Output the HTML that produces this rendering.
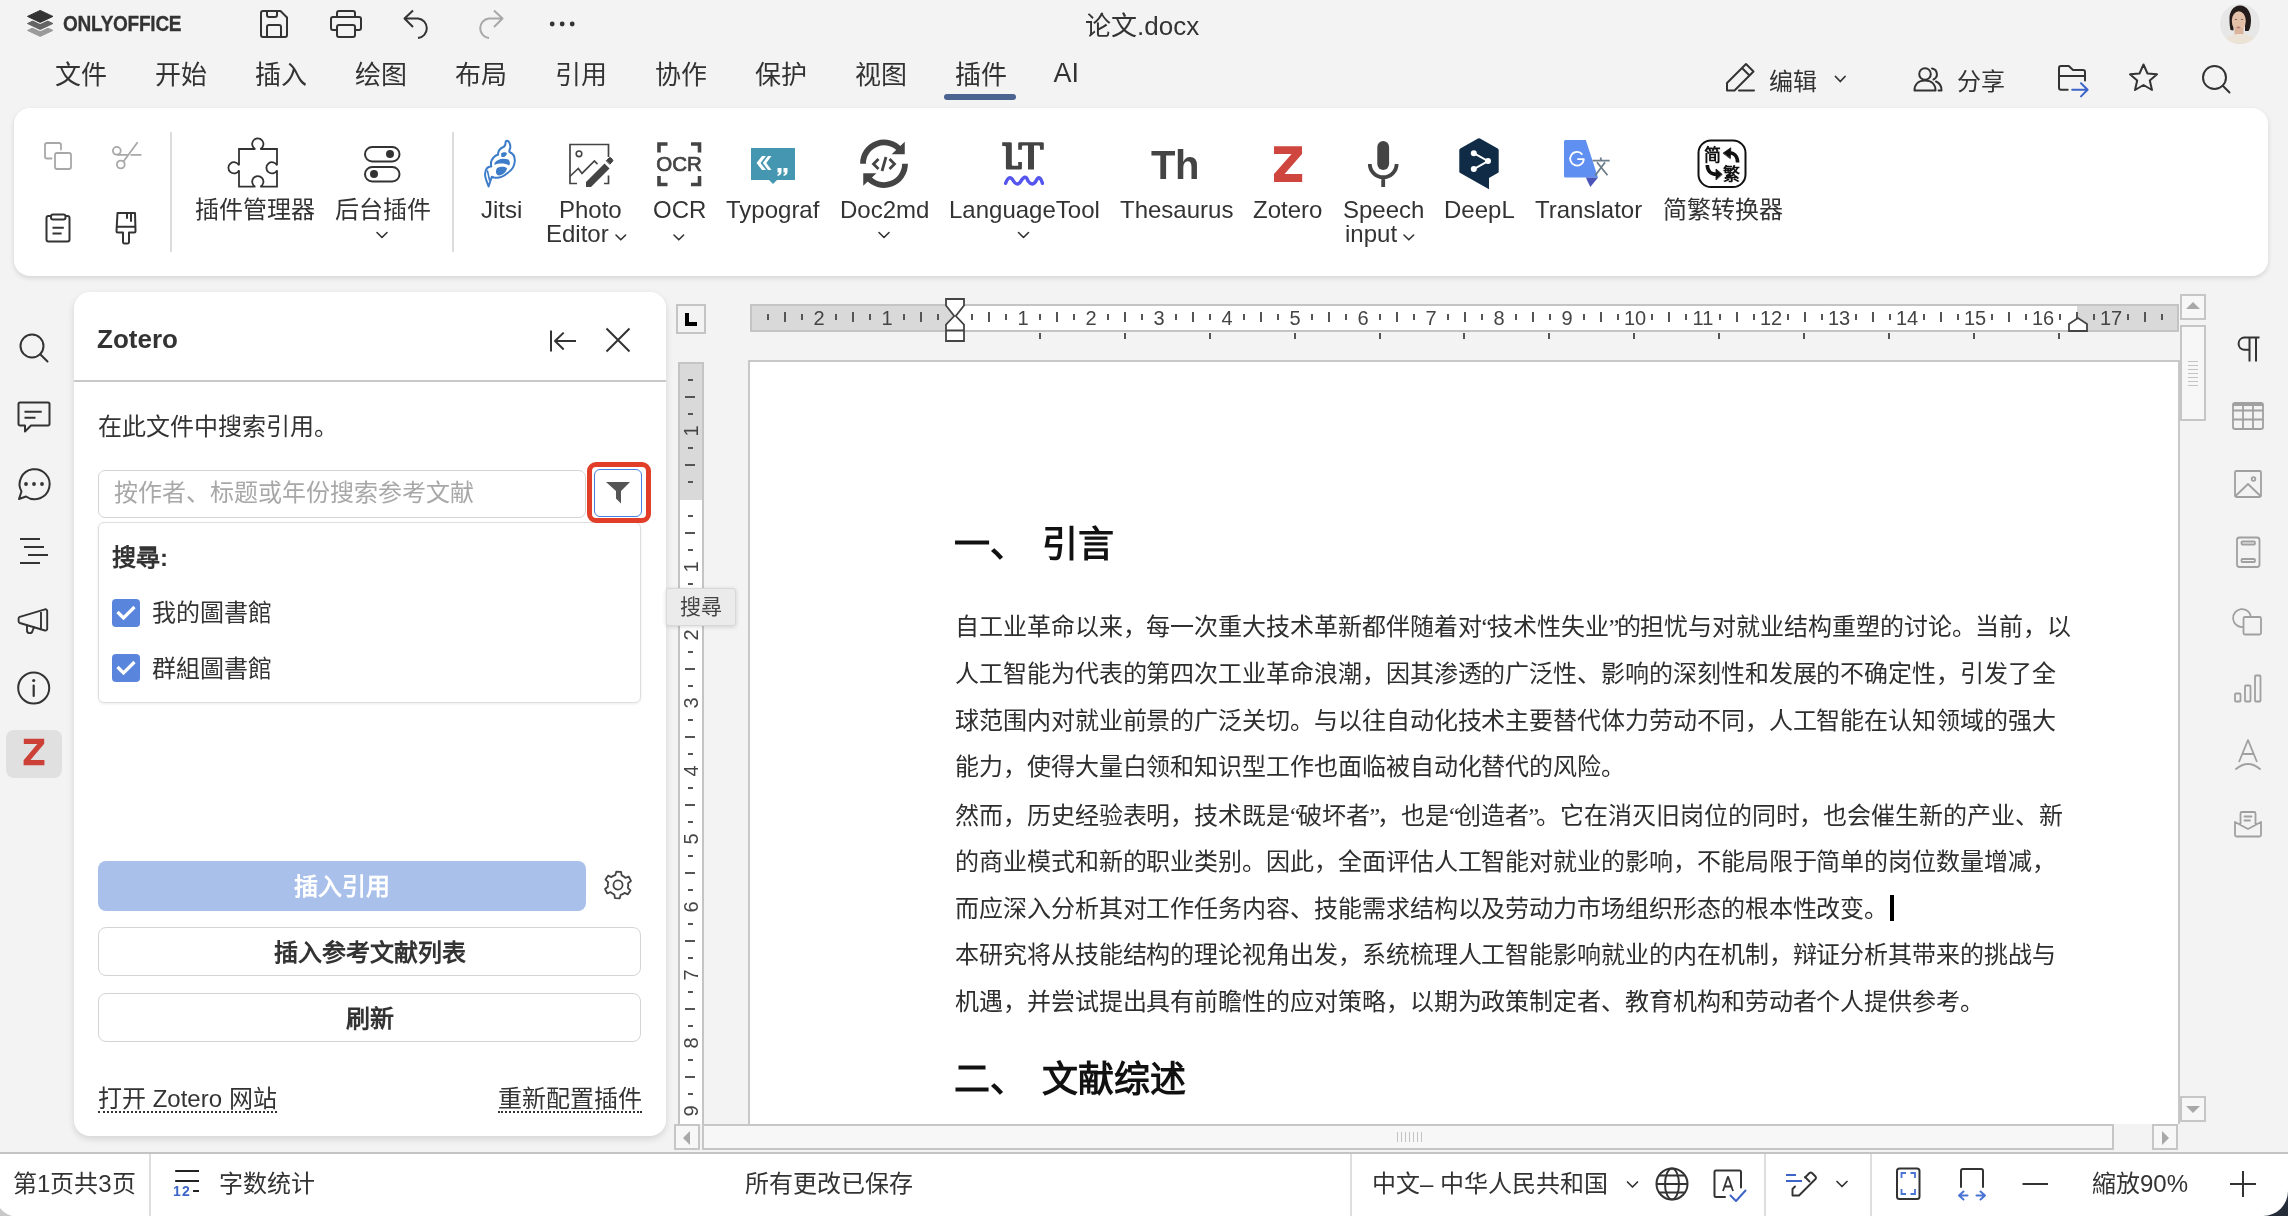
<!DOCTYPE html>
<html lang="zh-CN"><head><meta charset="utf-8">
<style>
*{box-sizing:border-box;margin:0;padding:0}
html,body{width:2288px;height:1216px;overflow:hidden}
body{will-change:transform;background:#f3f3f3;font-family:"Liberation Sans",sans-serif;color:#333;position:relative}
.a{position:absolute}
.t{white-space:nowrap;line-height:1}
svg.i{position:absolute;overflow:visible;fill:none;stroke:#333;stroke-width:2;stroke-linecap:round;stroke-linejoin:round}
.tab{position:absolute;top:58.5px;font-size:26px;line-height:32px;color:#333;white-space:nowrap}
.lbl{position:absolute;top:197px;font-size:24px;line-height:25px;color:#333;white-space:nowrap;text-align:center}
.doc{position:absolute;left:956px;width:1116px;font-family:"Liberation Serif",serif;font-size:24px;letter-spacing:-0.07px;line-height:30px;color:#2e2e2e;white-space:nowrap;text-align:left}
.q{letter-spacing:-2.95px}
.ri{position:absolute;left:2232px}
</style></head><body>

<!-- ===== TITLE BAR ===== -->
<div class="a t" style="left:62.5px;top:13px;font-size:22px;font-weight:bold;color:#333;letter-spacing:-0.3px;transform:scaleX(0.865);transform-origin:0 0;-webkit-text-stroke:0.3px #333">ONLYOFFICE</div>
<div class="a t" style="left:1085px;top:12.5px;font-size:26px;color:#333">论文.docx</div>

<!-- ===== MENU TABS ===== -->
<div class="tab" style="left:55px">文件</div>
<div class="tab" style="left:155px">开始</div>
<div class="tab" style="left:255px">插入</div>
<div class="tab" style="left:355px">绘图</div>
<div class="tab" style="left:455px">布局</div>
<div class="tab" style="left:555px">引用</div>
<div class="tab" style="left:655px">协作</div>
<div class="tab" style="left:755px">保护</div>
<div class="tab" style="left:855px">视图</div>
<div class="tab" style="left:955px">插件</div>
<div class="tab" style="left:1053.5px;top:57px;font-size:27px">AI</div>
<div class="a" style="left:943.7px;top:94px;width:72.5px;height:6px;border-radius:3px;background:#4b6391"></div>

<div class="a t" style="left:1768.5px;top:69.5px;font-size:24px">编辑</div>
<div class="a t" style="left:1956.5px;top:69.5px;font-size:24px">分享</div>

<!-- ===== TOOLBAR CARD ===== -->
<div class="a" style="left:14px;top:108px;width:2254px;height:168px;background:#fff;border-radius:16px;box-shadow:0 2px 5px rgba(0,0,0,0.13)"></div>
<div class="a" style="left:170px;top:132px;width:2px;height:120px;background:#dcdcdc"></div>
<div class="a" style="left:452px;top:132px;width:2px;height:120px;background:#dcdcdc"></div>

<div class="lbl" style="left:195px">插件管理器</div>
<div class="lbl" style="left:335px">后台插件</div>
<div class="lbl" style="left:481px">Jitsi</div>
<div class="lbl" style="left:559px">Photo</div><div class="lbl" style="left:546px;top:221px">Editor</div>
<div class="lbl" style="left:653px">OCR</div>
<div class="lbl" style="left:726px">Typograf</div>
<div class="lbl" style="left:840px">Doc2md</div>
<div class="lbl" style="left:949px">LanguageTool</div>
<div class="lbl" style="left:1120px">Thesaurus</div>
<div class="lbl" style="left:1253px">Zotero</div>
<div class="lbl" style="left:1343px">Speech</div><div class="lbl" style="left:1345px;top:221px">input</div>
<div class="lbl" style="left:1444px">DeepL</div>
<div class="lbl" style="left:1535px">Translator</div>
<div class="lbl" style="left:1663px">简繁转换器</div>

<!-- ===== ZOTERO PANEL ===== -->
<div class="a" style="left:74px;top:292px;width:592px;height:844px;background:#fff;border-radius:16px;box-shadow:0 3px 7px rgba(0,0,0,0.13)"></div>
<div class="a t" style="left:97px;top:326px;font-size:26px;font-weight:bold;color:#333">Zotero</div>
<div class="a" style="left:74px;top:380px;width:592px;height:2px;background:#c8c8c8"></div>
<div class="a t" style="left:98px;top:415px;font-size:24px;color:#333">在此文件中搜索引用。</div>

<div class="a" style="left:98px;top:470px;width:488px;height:48px;border:1.5px solid #d4d4d4;border-radius:7px"></div>
<div class="a t" style="left:114px;top:481px;font-size:24px;color:#a8a8a8">按作者、标题或年份搜索参考文献</div>

<div class="a" style="left:98px;top:522px;width:543px;height:181px;border:1.5px solid #dedede;border-radius:6px;box-shadow:0 1px 3px rgba(0,0,0,0.08)"></div>
<div class="a t" style="left:112px;top:545.5px;font-size:24px;font-weight:bold;color:#333">搜尋:</div>
<div class="a t" style="left:152px;top:601px;font-size:24px;color:#333">我的圖書館</div>
<div class="a t" style="left:152px;top:657px;font-size:24px;color:#333">群組圖書館</div>

<div class="a" style="left:98px;top:861px;width:488px;height:50px;background:#a9c0eb;border-radius:8px"></div>
<div class="a t" style="left:98px;top:875px;width:488px;text-align:center;font-size:24px;font-weight:bold;color:#fff">插入引用</div>
<div class="a" style="left:98px;top:927px;width:543px;height:49px;border:1.5px solid #d4d4d4;border-radius:8px"></div>
<div class="a t" style="left:98px;top:941px;width:543px;text-align:center;font-size:24px;font-weight:bold;color:#333">插入参考文献列表</div>
<div class="a" style="left:98px;top:993px;width:543px;height:49px;border:1.5px solid #d4d4d4;border-radius:8px"></div>
<div class="a t" style="left:98px;top:1007px;width:543px;text-align:center;font-size:24px;font-weight:bold;color:#333">刷新</div>

<div class="a t" style="left:98px;top:1087px;font-size:24px;color:#333;border-bottom:2px dotted #333;padding-bottom:0px">打开 Zotero 网站</div>
<div class="a t" style="left:498px;top:1087px;font-size:24px;color:#333;border-bottom:2px dotted #333">重新配置插件</div>


<!-- ===== DOCUMENT AREA ===== -->
<style>
.rn{position:absolute;top:308.5px;width:40px;text-align:center;font-size:20px;line-height:19px;color:#444}
.vn{position:absolute;left:671px;width:40px;height:20px;text-align:center;font-size:20px;line-height:20px;color:#444;transform:rotate(-90deg)}
.sb{position:absolute;background:#f7f7f7;border:2px solid #c6c6c6}
</style>
<div class="a" style="left:748px;top:360px;width:1432px;height:764px;background:#fff;border-left:2px solid #c8c8c8;border-top:2px solid #c8c8c8;border-right:2px solid #c8c8c8"></div>
<!-- horizontal ruler -->
<div class="a" style="left:750px;top:304px;width:1429px;height:28px;background:#d9d9d9;border:2px solid #c4c4c4"></div>
<div class="a" style="left:955px;top:306px;width:1122px;height:24px;background:#fff"></div>
<!-- tab button -->
<div class="a" style="left:676px;top:304px;width:30px;height:30px;border:2px solid #c4c4c4;background:#f3f3f3"></div>
<div class="a" style="left:685px;top:313px;width:4px;height:13px;background:#000"></div>
<div class="a" style="left:685px;top:322px;width:12px;height:4px;background:#000"></div>
<!-- vertical ruler -->
<div class="a" style="left:678px;top:362px;width:26px;height:762px;background:#fff;border:2px solid #c4c4c4;border-bottom:none"></div>
<div class="a" style="left:680px;top:364px;width:22px;height:136px;background:#d9d9d9"></div>
<div class="a" style="left:767px;top:314px;width:2px;height:6px;background:#555"></div>
<div class="a" style="left:784px;top:312px;width:2px;height:10px;background:#555"></div>
<div class="a" style="left:801px;top:314px;width:2px;height:6px;background:#555"></div>
<div class="rn" style="left:799px">2</div>
<div class="a" style="left:835px;top:314px;width:2px;height:6px;background:#555"></div>
<div class="a" style="left:852px;top:312px;width:2px;height:10px;background:#555"></div>
<div class="a" style="left:869px;top:314px;width:2px;height:6px;background:#555"></div>
<div class="rn" style="left:867px">1</div>
<div class="a" style="left:903px;top:314px;width:2px;height:6px;background:#555"></div>
<div class="a" style="left:920px;top:312px;width:2px;height:10px;background:#555"></div>
<div class="a" style="left:937px;top:314px;width:2px;height:6px;background:#555"></div>
<div class="a" style="left:971px;top:314px;width:2px;height:6px;background:#555"></div>
<div class="a" style="left:988px;top:312px;width:2px;height:10px;background:#555"></div>
<div class="a" style="left:1005px;top:314px;width:2px;height:6px;background:#555"></div>
<div class="rn" style="left:1003px">1</div>
<div class="a" style="left:1039px;top:314px;width:2px;height:6px;background:#555"></div>
<div class="a" style="left:1056px;top:312px;width:2px;height:10px;background:#555"></div>
<div class="a" style="left:1073px;top:314px;width:2px;height:6px;background:#555"></div>
<div class="rn" style="left:1071px">2</div>
<div class="a" style="left:1107px;top:314px;width:2px;height:6px;background:#555"></div>
<div class="a" style="left:1124px;top:312px;width:2px;height:10px;background:#555"></div>
<div class="a" style="left:1141px;top:314px;width:2px;height:6px;background:#555"></div>
<div class="rn" style="left:1139px">3</div>
<div class="a" style="left:1175px;top:314px;width:2px;height:6px;background:#555"></div>
<div class="a" style="left:1192px;top:312px;width:2px;height:10px;background:#555"></div>
<div class="a" style="left:1209px;top:314px;width:2px;height:6px;background:#555"></div>
<div class="rn" style="left:1207px">4</div>
<div class="a" style="left:1243px;top:314px;width:2px;height:6px;background:#555"></div>
<div class="a" style="left:1260px;top:312px;width:2px;height:10px;background:#555"></div>
<div class="a" style="left:1277px;top:314px;width:2px;height:6px;background:#555"></div>
<div class="rn" style="left:1275px">5</div>
<div class="a" style="left:1311px;top:314px;width:2px;height:6px;background:#555"></div>
<div class="a" style="left:1328px;top:312px;width:2px;height:10px;background:#555"></div>
<div class="a" style="left:1345px;top:314px;width:2px;height:6px;background:#555"></div>
<div class="rn" style="left:1343px">6</div>
<div class="a" style="left:1379px;top:314px;width:2px;height:6px;background:#555"></div>
<div class="a" style="left:1396px;top:312px;width:2px;height:10px;background:#555"></div>
<div class="a" style="left:1413px;top:314px;width:2px;height:6px;background:#555"></div>
<div class="rn" style="left:1411px">7</div>
<div class="a" style="left:1447px;top:314px;width:2px;height:6px;background:#555"></div>
<div class="a" style="left:1464px;top:312px;width:2px;height:10px;background:#555"></div>
<div class="a" style="left:1481px;top:314px;width:2px;height:6px;background:#555"></div>
<div class="rn" style="left:1479px">8</div>
<div class="a" style="left:1515px;top:314px;width:2px;height:6px;background:#555"></div>
<div class="a" style="left:1532px;top:312px;width:2px;height:10px;background:#555"></div>
<div class="a" style="left:1549px;top:314px;width:2px;height:6px;background:#555"></div>
<div class="rn" style="left:1547px">9</div>
<div class="a" style="left:1583px;top:314px;width:2px;height:6px;background:#555"></div>
<div class="a" style="left:1600px;top:312px;width:2px;height:10px;background:#555"></div>
<div class="a" style="left:1617px;top:314px;width:2px;height:6px;background:#555"></div>
<div class="rn" style="left:1615px">10</div>
<div class="a" style="left:1651px;top:314px;width:2px;height:6px;background:#555"></div>
<div class="a" style="left:1668px;top:312px;width:2px;height:10px;background:#555"></div>
<div class="a" style="left:1685px;top:314px;width:2px;height:6px;background:#555"></div>
<div class="rn" style="left:1683px">11</div>
<div class="a" style="left:1719px;top:314px;width:2px;height:6px;background:#555"></div>
<div class="a" style="left:1736px;top:312px;width:2px;height:10px;background:#555"></div>
<div class="a" style="left:1753px;top:314px;width:2px;height:6px;background:#555"></div>
<div class="rn" style="left:1751px">12</div>
<div class="a" style="left:1787px;top:314px;width:2px;height:6px;background:#555"></div>
<div class="a" style="left:1804px;top:312px;width:2px;height:10px;background:#555"></div>
<div class="a" style="left:1821px;top:314px;width:2px;height:6px;background:#555"></div>
<div class="rn" style="left:1819px">13</div>
<div class="a" style="left:1855px;top:314px;width:2px;height:6px;background:#555"></div>
<div class="a" style="left:1872px;top:312px;width:2px;height:10px;background:#555"></div>
<div class="a" style="left:1889px;top:314px;width:2px;height:6px;background:#555"></div>
<div class="rn" style="left:1887px">14</div>
<div class="a" style="left:1038.9px;top:333px;width:2px;height:6px;background:#555"></div>
<div class="a" style="left:1123.8px;top:333px;width:2px;height:6px;background:#555"></div>
<div class="a" style="left:1208.7px;top:333px;width:2px;height:6px;background:#555"></div>
<div class="a" style="left:1293.6px;top:333px;width:2px;height:6px;background:#555"></div>
<div class="a" style="left:1378.5px;top:333px;width:2px;height:6px;background:#555"></div>
<div class="a" style="left:1463.4px;top:333px;width:2px;height:6px;background:#555"></div>
<div class="a" style="left:1548.3px;top:333px;width:2px;height:6px;background:#555"></div>
<div class="a" style="left:1633.2px;top:333px;width:2px;height:6px;background:#555"></div>
<div class="a" style="left:1718.1px;top:333px;width:2px;height:6px;background:#555"></div>
<div class="a" style="left:1803.0px;top:333px;width:2px;height:6px;background:#555"></div>
<div class="a" style="left:1887.9px;top:333px;width:2px;height:6px;background:#555"></div>
<div class="a" style="left:1972.8px;top:333px;width:2px;height:6px;background:#555"></div>
<div class="a" style="left:2057.7px;top:333px;width:2px;height:6px;background:#555"></div>
<div class="a" style="left:688px;top:379px;width:5px;height:2px;background:#555"></div>
<div class="a" style="left:685px;top:396px;width:10px;height:2px;background:#555"></div>
<div class="a" style="left:688px;top:413px;width:5px;height:2px;background:#555"></div>
<div class="vn" style="top:421px">1</div>
<div class="a" style="left:688px;top:447px;width:5px;height:2px;background:#555"></div>
<div class="a" style="left:685px;top:464px;width:10px;height:2px;background:#555"></div>
<div class="a" style="left:688px;top:481px;width:5px;height:2px;background:#555"></div>
<div class="a" style="left:688px;top:515px;width:5px;height:2px;background:#555"></div>
<div class="a" style="left:685px;top:532px;width:10px;height:2px;background:#555"></div>
<div class="a" style="left:688px;top:549px;width:5px;height:2px;background:#555"></div>
<div class="vn" style="top:557px">1</div>
<div class="a" style="left:688px;top:583px;width:5px;height:2px;background:#555"></div>
<div class="a" style="left:685px;top:600px;width:10px;height:2px;background:#555"></div>
<div class="a" style="left:688px;top:617px;width:5px;height:2px;background:#555"></div>
<div class="vn" style="top:625px">2</div>
<div class="a" style="left:688px;top:651px;width:5px;height:2px;background:#555"></div>
<div class="a" style="left:685px;top:668px;width:10px;height:2px;background:#555"></div>
<div class="a" style="left:688px;top:685px;width:5px;height:2px;background:#555"></div>
<div class="vn" style="top:693px">3</div>
<div class="a" style="left:688px;top:719px;width:5px;height:2px;background:#555"></div>
<div class="a" style="left:685px;top:736px;width:10px;height:2px;background:#555"></div>
<div class="a" style="left:688px;top:753px;width:5px;height:2px;background:#555"></div>
<div class="vn" style="top:761px">4</div>
<div class="a" style="left:688px;top:787px;width:5px;height:2px;background:#555"></div>
<div class="a" style="left:685px;top:804px;width:10px;height:2px;background:#555"></div>
<div class="a" style="left:688px;top:821px;width:5px;height:2px;background:#555"></div>
<div class="vn" style="top:829px">5</div>
<div class="a" style="left:688px;top:855px;width:5px;height:2px;background:#555"></div>
<div class="a" style="left:685px;top:872px;width:10px;height:2px;background:#555"></div>
<div class="a" style="left:688px;top:889px;width:5px;height:2px;background:#555"></div>
<div class="vn" style="top:897px">6</div>
<div class="a" style="left:688px;top:923px;width:5px;height:2px;background:#555"></div>
<div class="a" style="left:685px;top:940px;width:10px;height:2px;background:#555"></div>
<div class="a" style="left:688px;top:957px;width:5px;height:2px;background:#555"></div>
<div class="vn" style="top:965px">7</div>
<div class="a" style="left:688px;top:991px;width:5px;height:2px;background:#555"></div>
<div class="a" style="left:685px;top:1008px;width:10px;height:2px;background:#555"></div>
<div class="a" style="left:688px;top:1025px;width:5px;height:2px;background:#555"></div>
<div class="vn" style="top:1033px">8</div>
<div class="a" style="left:688px;top:1059px;width:5px;height:2px;background:#555"></div>
<div class="a" style="left:685px;top:1076px;width:10px;height:2px;background:#555"></div>
<div class="a" style="left:688px;top:1093px;width:5px;height:2px;background:#555"></div>
<div class="vn" style="top:1101px">9</div>
<div class="a" style="left:1923px;top:314px;width:2px;height:6px;background:#555"></div>
<div class="a" style="left:1940px;top:312px;width:2px;height:10px;background:#555"></div>
<div class="a" style="left:1957px;top:314px;width:2px;height:6px;background:#555"></div>
<div class="rn" style="left:1955px">15</div>
<div class="a" style="left:1991px;top:314px;width:2px;height:6px;background:#555"></div>
<div class="a" style="left:2008px;top:312px;width:2px;height:10px;background:#555"></div>
<div class="a" style="left:2025px;top:314px;width:2px;height:6px;background:#555"></div>
<div class="rn" style="left:2023px">16</div>
<div class="a" style="left:2059px;top:314px;width:2px;height:6px;background:#555"></div>
<div class="a" style="left:2076px;top:312px;width:2px;height:10px;background:#555"></div>
<div class="a" style="left:2093px;top:314px;width:2px;height:6px;background:#555"></div>
<div class="rn" style="left:2091px">17</div>
<div class="a" style="left:2127px;top:314px;width:2px;height:6px;background:#555"></div>
<div class="a" style="left:2144px;top:312px;width:2px;height:10px;background:#555"></div>
<div class="a" style="left:2161px;top:314px;width:2px;height:6px;background:#555"></div>
<!-- indent markers -->
<svg class="i" style="left:945px;top:298px" width="20" height="44" viewBox="0 0 20 44"><path d="M1 1H19V7.5L10.8 18L19 26.7V32.5H1V26.7L9.2 18L1 7.5Z M1 32.5V43H19V32.5" stroke="#444" stroke-width="1.8" fill="#fff" stroke-linecap="butt" stroke-linejoin="miter"/></svg>
<svg class="i" style="left:2068px;top:317px" width="20" height="15" viewBox="0 0 20 15"><path d="M1 14V7L10 1L19 7V14Z" stroke="#444" stroke-width="1.8" fill="#fff" stroke-linecap="butt" stroke-linejoin="miter"/></svg>
<!-- vertical scrollbar -->
<div class="sb" style="left:2180px;top:294px;width:26px;height:26px"></div>
<svg class="i" style="left:2186px;top:302px" width="14" height="8"><path d="M0 7L7 0L14 7Z" fill="#a8a8a8" stroke="none"/></svg>
<div class="sb" style="left:2180px;top:325px;width:26px;height:96px"></div>
<div class="a" style="left:2188px;top:361px;width:10px;height:26px;background:repeating-linear-gradient(#c4c4c4 0 1.5px,transparent 1.5px 4px)"></div>
<div class="sb" style="left:2180px;top:1096px;width:26px;height:26px"></div>
<svg class="i" style="left:2186px;top:1106px" width="14" height="8"><path d="M0 0L14 0L7 7Z" fill="#a8a8a8" stroke="none"/></svg>
<!-- horizontal scrollbar -->
<div class="sb" style="left:674px;top:1124px;width:26px;height:26px"></div>
<svg class="i" style="left:683px;top:1131px" width="8" height="14"><path d="M7 0L0 7L7 14Z" fill="#a8a8a8" stroke="none"/></svg>
<div class="sb" style="left:702px;top:1124px;width:1412px;height:26px"></div>
<div class="a" style="left:1397px;top:1132px;width:26px;height:10px;background:repeating-linear-gradient(90deg,#c4c4c4 0 1.5px,transparent 1.5px 4px)"></div>
<div class="sb" style="left:2152px;top:1124px;width:26px;height:26px"></div>
<svg class="i" style="left:2162px;top:1131px" width="8" height="14"><path d="M0 0L7 7L0 14Z" fill="#a8a8a8" stroke="none"/></svg>

<!-- document text -->
<div class="a t" style="left:954px;top:527px;font-family:'Liberation Serif',serif;font-size:36px;font-weight:bold;color:#111">一、</div><div class="a t" style="left:1042px;top:527px;font-family:'Liberation Serif',serif;font-size:36px;font-weight:bold;color:#111">引言</div>
<div class="doc" style="left:955px;top:612px">自工业革命以来，每一次重大技术革新都伴随着对<span class="q">“</span>技术性失业<span class="q">”</span>的担忧与对就业结构重塑的讨论。当前，以</div>
<div class="doc" style="left:955px;top:659px">人工智能为代表的第四次工业革命浪潮，因其渗透的广泛性、影响的深刻性和发展的不确定性，引发了全</div>
<div class="doc" style="left:955px;top:705.5px">球范围内对就业前景的广泛关切。与以往自动化技术主要替代体力劳动不同，人工智能在认知领域的强大</div>
<div class="doc" style="left:955px;top:751.5px">能力，使得大量白领和知识型工作也面临被自动化替代的风险。</div>
<div class="doc" style="left:955px;top:800.5px">然而，历史经验表明，技术既是<span class="q">“</span>破坏者<span class="q">”</span>，也是<span class="q">“</span>创造者<span class="q">”</span>。它在消灭旧岗位的同时，也会催生新的产业、新</div>
<div class="doc" style="left:955px;top:846.5px">的商业模式和新的职业类别。因此，全面评估人工智能对就业的影响，不能局限于简单的岗位数量增减，</div>
<div class="doc" style="left:955px;top:894px">而应深入分析其对工作任务内容、技能需求结构以及劳动力市场组织形态的根本性改变。</div>
<div class="a" style="left:1889.5px;top:895px;width:4.5px;height:26px;background:#000"></div>
<div class="doc" style="left:955px;top:940px">本研究将从技能结构的理论视角出发，系统梳理人工智能影响就业的内在机制，辩证分析其带来的挑战与</div>
<div class="doc" style="left:955px;top:987px">机遇，并尝试提出具有前瞻性的应对策略，以期为政策制定者、教育机构和劳动者个人提供参考。</div>
<div class="a t" style="left:954px;top:1062px;font-family:'Liberation Serif',serif;font-size:36px;font-weight:bold;color:#111">二、</div><div class="a t" style="left:1042px;top:1062px;font-family:'Liberation Serif',serif;font-size:36px;font-weight:bold;color:#111">文献综述</div>

<!-- tooltip -->
<div class="a t" style="left:666px;top:588px;width:70px;height:38px;background:#ebebeb;border:1px solid #d8d8d8;border-radius:3px;box-shadow:0 1px 4px rgba(0,0,0,0.15);font-size:21px;line-height:36px;text-align:center;color:#444">搜尋</div>

<!-- ===== STATUS BAR ===== -->
<div class="a" style="left:0;top:1152px;width:2288px;height:64px;background:#fff;border-top:2px solid #c4c4c4"></div>
<div class="a" style="left:149px;top:1154px;width:2px;height:62px;background:#dedede"></div>
<div class="a" style="left:1350px;top:1154px;width:2px;height:62px;background:#dedede"></div>
<div class="a" style="left:1764px;top:1154px;width:2px;height:62px;background:#dedede"></div>
<div class="a" style="left:1870px;top:1154px;width:2px;height:62px;background:#dedede"></div>
<div class="a t" style="left:13px;top:1172px;font-size:24px">第1页共3页</div>
<div class="a t" style="left:219px;top:1172px;font-size:24px">字数统计</div>
<div class="a t" style="left:745px;top:1172px;font-size:24px">所有更改已保存</div>
<div class="a t" style="left:1372px;top:1172px;font-size:24px">中文– 中华人民共和国</div>
<div class="a t" style="left:2092px;top:1172px;font-size:24px">縮放90%</div>

<!-- ===== ICONS: title bar ===== -->
<svg class="a" style="left:20px;top:5px" width="40" height="40" viewBox="20 5 40 40"><path d="M27.500000000000004 30.4L40.2 24.4L52.900000000000006 30.4L40.2 36.4Z" fill="#9a9a9a" stroke="#9a9a9a" stroke-width="1" stroke-linejoin="round"/><path d="M27.500000000000004 23.5L40.2 17.5L52.900000000000006 23.5L40.2 29.5Z" fill="#f3f3f3" stroke="#f3f3f3" stroke-width="3.2" stroke-linejoin="round"/><path d="M27.500000000000004 23.5L40.2 17.5L52.900000000000006 23.5L40.2 29.5Z" fill="#646464" stroke="#646464" stroke-width="1" stroke-linejoin="round"/><path d="M27.500000000000004 16.4L40.2 10.399999999999999L52.900000000000006 16.4L40.2 22.4Z" fill="#f3f3f3" stroke="#f3f3f3" stroke-width="3.2" stroke-linejoin="round"/><path d="M27.500000000000004 16.4L40.2 10.399999999999999L52.900000000000006 16.4L40.2 22.4Z" fill="#333" stroke="#333" stroke-width="1" stroke-linejoin="round"/></svg>
<svg class="i" style="left:0;top:0" width="600" height="50" viewBox="0 0 600 50">
 <path d="M263 11H280.5L287 17.5V35A2 2 0 0 1 285 37H263A2 2 0 0 1 261 35V13A2 2 0 0 1 263 11Z M267 11V15A2 2 0 0 0 269 17H275A2 2 0 0 0 277 15V11 M267 37V27A2 2 0 0 1 269 25H279A2 2 0 0 1 281 27V37" stroke-width="2"/>
 <path d="M337 16V13A2 2 0 0 1 339 11H353A2 2 0 0 1 355 13V16 M337 30H333A2 2 0 0 1 331 28V19A2 2 0 0 1 333 17H359A2 2 0 0 1 361 19V28A2 2 0 0 1 359 30H355 M339 25H353A2 2 0 0 1 355 27V35A2 2 0 0 1 353 37H339A2 2 0 0 1 337 35V27A2 2 0 0 1 339 25Z" stroke-width="2"/>
 <path d="M413 10.5L404.5 18.5L413 27 M405 18.5H418A9.8 9.8 0 0 1 418 38" stroke-width="2" stroke-linecap="butt"/>
 <path d="M494 10.5L502.5 18.5L494 27 M502 18.5H489A9.8 9.8 0 0 0 489 38" stroke="#a8a8a8" stroke-width="2" stroke-linecap="butt"/>
 <circle cx="552.2" cy="24" r="2.4" fill="#333" stroke="none"/><circle cx="562.2" cy="24" r="2.4" fill="#333" stroke="none"/><circle cx="572.2" cy="24" r="2.4" fill="#333" stroke="none"/>
</svg>
<!-- avatar -->
<div class="a" style="left:2220px;top:4px;width:40px;height:40px;border-radius:50%;overflow:hidden;background:#e7e7e7">
<svg style="position:absolute;left:0;top:0" width="40" height="40" viewBox="2220 4 40 40">
  <path d="M2229.5 20C2229 12 2233 5.5 2240 5.5C2247 5.5 2251 12 2251 20C2251 25 2250 29 2248.5 31L2245 31L2245 17L2233.5 17L2233.5 30.5L2230.5 30C2229.8 27 2229.5 23 2229.5 20Z" fill="#241c1a"/>
  <ellipse cx="2238.8" cy="21" rx="7" ry="9.8" fill="#e3c0a8"/>
  <rect x="2234.5" y="28" width="9" height="7" fill="#dcb39b"/>
  <path d="M2223 42C2227 36.5 2233 34 2240 34C2247 34 2253 36.5 2257 42V46H2223Z" fill="#ece3d6"/>
  <ellipse cx="2238.5" cy="27.3" rx="2.2" ry="0.9" fill="#b97c72"/>
  <ellipse cx="2236" cy="19.5" rx="1.2" ry="0.6" fill="#6a5a58"/>
  <ellipse cx="2242" cy="19.5" rx="1.2" ry="0.6" fill="#6a5a58"/>
</svg>
</div>
<!-- menu right icons -->
<svg class="i" style="left:1700px;top:50px" width="560" height="52" viewBox="1700 50 560 52">
 <path d="M1727 90.5V83L1746 64L1753.5 71.5L1734.5 90.5Z M1742 68L1749.5 75.5 M1739 90.5H1754" stroke-width="2"/>
 <path d="M1835.5 76.5L1840.3 81.5L1845 76.5" stroke-width="1.8"/>
 <circle cx="1925" cy="74" r="5.8" stroke-width="2"/>
 <path d="M1914.5 90.5C1914.5 84 1919 80.5 1925 80.5C1931 80.5 1935.5 84 1935.5 90.5Z" stroke-width="2"/>
 <path d="M1932 68.5A5.8 5.8 0 0 1 1933.5 79.5 M1936 81.5C1940 83 1941.5 86 1941.5 90.5H1938.5" stroke-width="2"/>
 <path d="M2067.7 89.8H2061A2 2 0 0 1 2059 87.8V68.1A2 2 0 0 1 2061 66.1H2068.8L2073 70H2083A2 2 0 0 1 2085 72V80.6 M2059 75.9H2085" stroke-width="2"/>
 <path d="M2072.2 89.8H2087 M2081 83.2L2087.6 89.8L2081 96.4" stroke="#3d64c8" stroke-width="2"/>
 <path d="M2143.5 64.5L2147.5 73.5L2157 74.3L2149.8 80.6L2152 90L2143.5 85L2135 90L2137.2 80.6L2130 74.3L2139.5 73.5Z" stroke-width="2"/>
 <circle cx="2214.5" cy="77.5" r="11.5" stroke-width="2"/>
 <path d="M2222.8 85.8L2229.5 92.5" stroke-width="2"/>
</svg>
<!-- ===== ICONS: toolbar ===== -->
<svg class="i" style="left:0;top:100px" width="1800" height="160" viewBox="0 100 1800 160">
 <!-- copy (disabled) -->
 <path d="M51.5 158.5H47A2 2 0 0 1 45 156.5V145A2 2 0 0 1 47 143H59A2 2 0 0 1 61 145V149.5" stroke="#a8a8a8" stroke-width="1.8"/>
 <rect x="55" y="153" width="16" height="16" rx="2" stroke="#a8a8a8" stroke-width="1.8"/>
 <!-- cut (disabled) -->
 <circle cx="116.8" cy="150.8" r="3.9" stroke="#a8a8a8" stroke-width="1.8"/>
 <circle cx="120.8" cy="164.5" r="3.9" stroke="#a8a8a8" stroke-width="1.8"/>
 <path d="M117 154.8H128 M130.5 154.8H141.5 M123.5 161.5L137.6 142.3" stroke="#a8a8a8" stroke-width="1.8" stroke-linecap="butt"/>
 <!-- paste -->
 <path d="M50 216H48.5A2 2 0 0 0 46.5 218V239.5A2 2 0 0 0 48.5 241.5H67.5A2 2 0 0 0 69.5 239.5V218A2 2 0 0 0 67.5 216H66" stroke-width="2"/>
 <rect x="51" y="214.5" width="14.5" height="5" rx="2" stroke-width="2"/>
 <path d="M52.5 227.7H63.8 M52.5 233.6H61.6" stroke-width="2" stroke-linecap="butt"/>
 <!-- format painter -->
 <path d="M117.5 213H135L135.5 231A1.5 1.5 0 0 1 134 232.5H129V242A1.5 1.5 0 0 1 127.5 243.5H124.5A1.5 1.5 0 0 1 123 242V232.5H118A1.5 1.5 0 0 1 116.5 231Z M117 226.7H135.5 M127 213.5V218 M131 213.5V221" stroke-width="2"/>
 <!-- puzzle -->
 <path d="M239 149H255.3A5.6 5.6 0 1 1 260.3 149H277V165.3A5.6 5.6 0 1 0 277 170.3V186.7H260.3A5.6 5.6 0 1 0 255.3 186.7H239V170.3A5.6 5.6 0 1 1 239 165.3Z" stroke-width="1.8" stroke-linejoin="miter"/>
 <!-- toggles -->
 <rect x="365" y="147" width="34.5" height="14.5" rx="7.25" stroke-width="2"/>
 <rect x="365" y="167" width="34.5" height="14.5" rx="7.25" stroke-width="2"/>
 <circle cx="390" cy="154" r="4" fill="#333" stroke="none"/>
 <circle cx="374" cy="174" r="4" fill="#333" stroke="none"/>
 <!-- chevrons -->
 <path d="M377 232.5L382 237.5L387 232.5" stroke-width="1.6"/>
 <path d="M616 235L620.8 239.8L625.6 235" stroke-width="1.6"/>
 <path d="M674 235L678.8 239.8L683.6 235" stroke-width="1.6"/>
 <path d="M879 232.5L884 237.5L889 232.5" stroke-width="1.6"/>
 <path d="M1018.5 232.5L1023.5 237.5L1028.5 232.5" stroke-width="1.6"/>
 <path d="M1404 235L1408.8 239.8L1413.6 235" stroke-width="1.6"/>
 <!-- photo editor -->
 <path d="M577 183.5H570V144.5H608.5V157" stroke="#444" stroke-width="1.7" stroke-linecap="butt" stroke-linejoin="miter"/>
 <path d="M608.5 175.5V183.5H604" stroke="#444" stroke-width="1.7" stroke-linecap="butt" stroke-linejoin="miter"/>
 <circle cx="579" cy="153.8" r="2.8" stroke="#444" stroke-width="1.6"/>
 <path d="M570.3 176L578.3 168.5L582 173.4L594.4 161L597 163.7" stroke="#444" stroke-width="1.7" stroke-linejoin="miter"/>
 <path d="M586 182L604.5 163.5L609.5 168.5L591 187H586Z" fill="#444" stroke="none"/>
 <path d="M606.5 160.5L609 158A1.5 1.5 0 0 1 611 158L612.5 159.5A1.5 1.5 0 0 1 612.5 161.5L610 164Z" fill="#444" stroke="#444" stroke-width="1"/>
 <!-- OCR -->
 <path d="M659 152.5V144H667.5 M691 144H699.5V152.5 M659 176V184.5H667.5 M691 184.5H699.5V176" stroke="#444" stroke-width="3.6" stroke-linecap="butt" stroke-linejoin="miter"/>
 <!-- Typograf -->
 <path d="M751 148H795V180H777L773 184L769 180H751Z" fill="#4596b0" stroke="none"/>
 <path d="M762 156H766L760.5 163L766 170H762L756.5 163Z M768 156H771.5L766.3 163L771.5 170H768L762.8 163Z" fill="#fff" stroke="none"/>
 <path d="M777.5 168H781.5V172C781.5 174 780 175.5 777.5 176V174.5C778.5 174 779 173.5 779 172.5H777.5Z M783.5 168H787.5V172C787.5 174 786 175.5 783.5 176V174.5C784.5 174 785 173.5 785 172.5H783.5Z" fill="#fff" stroke="none"/>
 <!-- Doc2md -->
 <path d="M863 163.8A21 21 0 0 1 900.5 150.5" stroke="#444" stroke-width="5.8" stroke-linecap="butt"/>
 <path d="M904 143.5L904 153.5L893.5 153.5Z" fill="#444" stroke="#444" stroke-width="1.5" stroke-linejoin="miter"/>
 <path d="M905 163.8A21 21 0 0 1 867.5 177" stroke="#444" stroke-width="5.8" stroke-linecap="butt"/>
 <path d="M864 184L864 174L874.5 174Z" fill="#444" stroke="#444" stroke-width="1.5" stroke-linejoin="miter"/>
 <path d="M878.5 159L873.5 164L878.5 169 M889.5 159L894.5 164L889.5 169 M886 157L882 171" stroke="#444" stroke-width="2.8" stroke-linecap="butt" stroke-linejoin="miter"/>
 <!-- LanguageTool -->
 <path d="M1002.2 142.2H1010.5A1.3 1.3 0 0 1 1011.8 143.5V164.5A1.3 1.3 0 0 0 1013.1 165.8H1018.2V162H1021.9V168.2A1.3 1.3 0 0 1 1020.6 169.5H1007.2A1.3 1.3 0 0 1 1005.9 168.2V147.2A1.3 1.3 0 0 0 1004.6 145.9H1002.2Z" fill="#444" stroke="none"/>
 <path d="M1019.5 142.2H1042.5A1.3 1.3 0 0 1 1043.8 143.5V149.8H1040V147A1.3 1.3 0 0 0 1038.7 145.6H1034V169.5H1028V145.6H1023.2A1.3 1.3 0 0 0 1021.9 147V149.8H1018.2V143.5A1.3 1.3 0 0 1 1019.5 142.2Z" fill="#444" stroke="none"/>
 <path d="M1005.6 183.3C1008 177 1010.5 176 1013.5 181C1016 185 1018.5 185 1021 181C1024 176 1026.5 176 1028 181C1031 185 1033.5 185 1036 181C1038.5 176 1040.5 177 1042.4 183.3" stroke="#5555f0" stroke-width="3.4"/>
 <!-- Jitsi -->
 <path d="M507 140.8C509.5 141 510.5 145 510.3 147.5C510 149.5 508.8 150.5 509.5 152C512 153 515 155.5 514.8 161C514.5 166 512.5 170 507.5 173C503 177 499 178.5 494 177.5L491.8 176.8C490.5 180 489.5 184 488.6 186.5C487 182 485 178 485 174C485.5 169 487.5 166.3 491.3 166.5C490.5 163.5 491 160 494 157C495.5 155.5 497 155 498 154.8C498 151 499.5 148.5 503 147.2C505 146.5 505.5 145 505.5 143C505.5 141.5 506 140.8 507 140.8Z" stroke="#3d7cc9" stroke-width="2" fill="none"/>
 <path d="M494.5 163C497 159.5 502 157.5 508.5 159.5C510.5 162 510 164.5 509 165.5C505 163 499 163 494.5 165Z" fill="#3d7cc9" stroke="none"/>
 <path d="M497 168C501 166 506 166.5 507 168.5C506 172.5 503 175 499 175.5C496 175 495 172 497 168Z" fill="#3d7cc9" stroke="none"/>
 <path d="M501 153.5C503 152 506 151.5 507 153.5C506 156.5 504 157.5 501.5 157Z" fill="#3d7cc9" stroke="none"/>
 <path d="M487.5 171L489.5 180" stroke="#3d7cc9" stroke-width="1.6"/>
<!-- Zotero Z -->
 <path d="M1274 146.2H1302V153.9L1284.6 174H1302.2V181.9H1274V174L1291.6 153.9H1274Z" fill="#cf463f" stroke="none"/>
 <!-- mic -->
 <rect x="1377.3" y="141" width="11.8" height="29" rx="5.9" fill="#444" stroke="none"/>
 <path d="M1369.8 163.9A13.4 13.4 0 0 0 1396.6 163.9 M1383.2 177V187" stroke="#444" stroke-width="3.8" stroke-linecap="butt"/>
 <!-- DeepL -->
 <path d="M1478 138.6Q1479 138 1480 138.6L1497.7 148.5Q1498.7 149.1 1498.7 150.2V171.4Q1498.7 172.5 1497.7 173L1489 178V189.2L1460.3 173Q1459.3 172.5 1459.3 171.4V150.2Q1459.3 149.1 1460.3 148.5Z" fill="#0f2b46" stroke="none"/>
 <path d="M1473.8 153.2L1488 161.1L1473.8 169.1" stroke="#fff" stroke-width="1.9"/>
 <circle cx="1473.8" cy="153.2" r="3" fill="#fff" stroke="none"/>
 <circle cx="1488" cy="161.1" r="3" fill="#fff" stroke="none"/>
 <circle cx="1473.8" cy="169.1" r="3" fill="#fff" stroke="none"/>
 <!-- Google Translate -->
 <path d="M1565.5 140H1585.8L1598 177.5H1565.5A1.5 1.5 0 0 1 1564 176V141.5A1.5 1.5 0 0 1 1565.5 140Z" fill="#5f8ff0" stroke="none"/>
 <path d="M1585.8 177.5H1598L1590.3 187Z" fill="#4b55b8" stroke="none"/>
 <path d="M1582.4 154.6A6.8 6.8 0 1 0 1583.8 159.1H1577.3" stroke="#fff" stroke-width="1.8" stroke-linecap="butt"/>
 <path d="M1592.5 160.6H1609.7 M1600.8 157.4V160.6 M1605 162.3L1595.3 175.5 M1597 162.3L1607.5 175.3" stroke="#6d7e8a" stroke-width="1.8" stroke-linecap="butt"/>
 <!-- 简繁 -->
 <rect x="1698.5" y="140.5" width="47" height="46.5" rx="12.5" stroke="#111" stroke-width="2"/>
 <path d="M1737.6 162.5C1737.6 156 1734 152.7 1729 152.7 M1707.3 165C1707.3 170.5 1710.5 174.2 1716.5 174.2" stroke="#111" stroke-width="3.6" stroke-linecap="butt"/>
 <path d="M1723.3 153L1730.8 147.8L1730.3 158.3Z M1722 174.2L1716 169L1716 179.6Z" fill="#111" stroke="#111" stroke-width="0.8"/>
</svg>
<div class="a t" style="left:656px;top:153.5px;width:46px;text-align:center;font-size:20.5px;color:#444;-webkit-text-stroke:0.7px #444;letter-spacing:0px">OCR</div>
<div class="a t" style="left:1151px;top:144.5px;font-size:40px;font-weight:bold;color:#444;letter-spacing:-0.5px">Th</div>
<div class="a t" style="left:1704px;top:146.5px;font-size:17px;font-weight:bold;color:#111">简</div>
<div class="a t" style="left:1723px;top:166px;font-size:17px;font-weight:bold;color:#111">繁</div>
<!-- ===== ICONS: left sidebar, panel ===== -->
<svg class="i" style="left:0;top:320px" width="80" height="470" viewBox="0 320 80 470">
 <circle cx="32" cy="346" r="11.5" stroke-width="2"/>
 <path d="M40.2 354.2L47.5 361.5" stroke-width="2"/>
 <path d="M20 402.5H48A1.5 1.5 0 0 1 49.5 404V424A1.5 1.5 0 0 1 48 425.5H31L25 431.5V425.5H20A1.5 1.5 0 0 1 18.5 424V404A1.5 1.5 0 0 1 20 402.5Z" stroke-width="2"/>
 <path d="M24.5 411.8H41.7 M24.5 417.7H35.5" stroke-width="2" stroke-linecap="butt"/>
 <path d="M26 496.5A15 15 0 1 0 21.5 491.5L19 499Z" stroke-width="2"/>
 <circle cx="26" cy="484" r="1.9" fill="#333" stroke="none"/><circle cx="34" cy="484" r="1.9" fill="#333" stroke="none"/><circle cx="42" cy="484" r="1.9" fill="#333" stroke="none"/>
 <path d="M20 539H40 M24 547H44 M28 555H48 M20 563H40" stroke-width="2" stroke-linecap="butt"/>
 <path d="M41 610.8V629.5 M19.8 616.8L45 609.3A1.8 1.8 0 0 1 47.2 611.1V628.7A1.8 1.8 0 0 1 45 630.5L19.8 623A1.8 1.8 0 0 1 18.6 621.3V618.5A1.8 1.8 0 0 1 19.8 616.8Z M27 625V630A2.8 2.8 0 0 0 32.5 631L34 627" stroke-width="1.9"/>
 <circle cx="33.7" cy="688" r="15.5" stroke-width="2"/>
 <circle cx="33.7" cy="680.5" r="1.6" fill="#333" stroke="none"/>
 <path d="M33.7 685.5V696" stroke-width="2.2"/>
</svg>
<div class="a" style="left:6px;top:730px;width:56px;height:48px;background:#e0e0e0;border-radius:8px"></div>
<svg class="a" style="left:23px;top:738px" width="22" height="28" viewBox="0 0 22 28"><path d="M0.8 0.8H21.2V5.8L7.5 22H21.4V27.2H0.6V22.2L14.3 6H0.8Z" fill="#cc4038"/></svg>

<svg class="i" style="left:540px;top:320px" width="120" height="200" viewBox="540 320 120 200">
 <path d="M551 330.5V351.5 M555 341H576 M563.7 332.6L555 341L563.7 349.5" stroke-width="2" stroke-linecap="butt"/>
 <path d="M606.5 328.5L629.5 351.5 M629.5 328.5L606.5 351.5" stroke-width="2" stroke-linecap="butt"/>
</svg>
<div class="a" style="left:586.5px;top:462px;width:64px;height:61px;border:5.5px solid #e23d28;border-radius:9px"></div>
<div class="a" style="left:594px;top:469px;width:48px;height:48px;border:1.5px solid #4a7fe0;border-radius:6px"></div>
<svg class="a" style="left:605px;top:481px" width="26" height="24" viewBox="0 0 26 24"><path d="M1 1H25L16 10V22.5L11 17.5V10Z" fill="#555"/></svg>

<div class="a" style="left:112px;top:599px;width:28px;height:28px;background:#5a85dd;border-radius:4px"></div>
<div class="a" style="left:112px;top:654px;width:28px;height:28px;background:#5a85dd;border-radius:4px"></div>
<svg class="i" style="left:112px;top:599px" width="28" height="85" viewBox="0 0 28 85">
 <path d="M5.5 13L11.5 19L22.5 8 M5.5 68L11.5 74L22.5 63" stroke="#fff" stroke-width="3.2" stroke-linecap="butt" stroke-linejoin="miter"/>
</svg>
<!-- gear -->
<svg class="i" style="left:600px;top:867px;stroke:#444" width="36" height="36" viewBox="-18 -18 36 36">
 <path d="M-2.2 -14.2L2.2 -14.2L3 -10.4L6.6 -8.6L9.9 -10.8L13 -7.7L10.8 -4.4L12 -1L15.6 0L14.2 -0.2 M0 0" stroke="none"/>
 <g stroke-width="1.9" transform="scale(0.95) rotate(3)">
 <path id="gearp" d="M-2.5 -14H2.5L3.3 -10.3A10.5 10.5 0 0 1 7.3 -8L10.9 -9.3L13.4 -5L10.5 -2.4A10.5 10.5 0 0 1 10.5 2.4L13.4 5L10.9 9.3L7.3 8A10.5 10.5 0 0 1 3.3 10.3L2.5 14H-2.5L-3.3 10.3A10.5 10.5 0 0 1 -7.3 8L-10.9 9.3L-13.4 5L-10.5 2.4A10.5 10.5 0 0 1 -10.5 -2.4L-13.4 -5L-10.9 -9.3L-7.3 -8A10.5 10.5 0 0 1 -3.3 -10.3Z"/>
 <circle cx="0" cy="0" r="4.8"/>
 </g>
</svg>
<!-- ===== ICONS: right sidebar ===== -->
<svg class="i" style="left:2230px;top:330px" width="36" height="36" viewBox="2230 330 36 36"><path d="M2259.5 337.5H2244A6.2 6.2 0 0 0 2244 349.8H2249.5 M2249.5 337.5V361.5 M2256 337.5V361.5" stroke-width="2" stroke-linecap="butt"/></svg>
<svg class="i" style="left:2220px;top:390px" width="68" height="460" viewBox="2220 390 68 460">
 <g stroke="#a0a0a0" stroke-width="1.8">
 <rect x="2233" y="403" width="30" height="26" rx="2"/>
 <path d="M2233 410.5H2263 M2233 419.5H2263 M2243 403V429 M2253 403V429" stroke-linecap="butt"/>
 <path d="M2233 404.5H2263" stroke-width="3" stroke-linecap="butt"/>
 <rect x="2235" y="471" width="26" height="26" rx="1.5"/>
 <path d="M2235.5 496L2248 484L2260.5 496" />
 <circle cx="2253.5" cy="479" r="1.8"/>
 <rect x="2237" y="537.5" width="22.5" height="29.5" rx="2.5"/>
 <rect x="2241.5" y="541.5" width="13.5" height="3" rx="1"/>
 <rect x="2241.5" y="559" width="13.5" height="3" rx="1"/>
 <path d="M2251 617A9 9 0 1 0 2243 627" />
 <rect x="2243.5" y="617" width="17.5" height="17.5" rx="1.5"/>
 <rect x="2235" y="693.5" width="5.5" height="8" rx="1"/>
 <rect x="2245" y="685.5" width="5.5" height="16" rx="1"/>
 <rect x="2255" y="675.5" width="5.5" height="26" rx="1"/>
 <path d="M2239 762L2248 740L2257 762 M2242 754H2254" stroke-linecap="butt"/>
 <path d="M2236 769Q2248 759 2260 769" />
 <path d="M2235 822V835A1.5 1.5 0 0 0 2236.5 836.5H2259.5A1.5 1.5 0 0 0 2261 835V822L2248 829Z M2240.5 825V813.5A1.5 1.5 0 0 1 2242 812H2254A1.5 1.5 0 0 1 2255.5 813.5V825 M2244.5 816.5H2251.5 M2244.5 820.5H2250" />
 </g>
</svg>
<!-- ===== ICONS: status bar ===== -->
<svg class="i" style="left:160px;top:1160px" width="60" height="50" viewBox="160 1160 60 50">
 <path d="M175.2 1171H199 M175.2 1181H199 M193 1191H199" stroke="#222" stroke-width="2" stroke-linecap="butt"/>
</svg>
<div class="a t" style="left:173px;top:1184px;font-size:14px;font-weight:bold;color:#3d64c8;letter-spacing:1.3px">12</div>
<svg class="i" style="left:1600px;top:1160px" width="680" height="50" viewBox="1600 1160 680 50">
 <path d="M1627.5 1182L1632.5 1187L1637.5 1182" stroke-width="1.7"/>
 <circle cx="1672" cy="1184" r="15.5" stroke-width="2"/>
 <ellipse cx="1672" cy="1184" rx="7" ry="15.5" stroke-width="2"/>
 <path d="M1656.5 1184H1687.5 M1659 1175.5H1685 M1659 1192.5H1685" stroke-width="2" stroke-linecap="butt"/>
 <path d="M1741 1187.5V1172A1.5 1.5 0 0 0 1739.5 1170.5H1716A1.5 1.5 0 0 0 1714.5 1172V1195.5A1.5 1.5 0 0 0 1716 1197H1725" stroke-width="2"/>
 <path d="M1723 1191L1727.8 1177H1728.2L1733 1191 M1724.5 1186.5H1731.5" stroke-width="1.8" stroke-linecap="butt"/>
 <path d="M1730.5 1195.5L1736 1201L1745.5 1190.5" stroke="#3d64c8" stroke-width="2"/>
 <path d="M1786 1175H1796 M1786 1181H1802" stroke="#3d64c8" stroke-width="1.9" stroke-linecap="butt"/>
 <path d="M1795 1186.5L1792.5 1189V1195.5H1799L1815.5 1179A1.8 1.8 0 0 0 1815.5 1176.5L1812 1173A1.8 1.8 0 0 0 1809.5 1173L1805 1177.5 M1809.5 1181.5L1805 1177" stroke-width="1.9"/>
 <path d="M1837 1181.5L1842 1186.5L1847 1181.5" stroke-width="1.7"/>
 <rect x="1897" y="1168.5" width="22.5" height="30.5" rx="2.5" stroke-width="2"/>
 <path d="M1901.5 1178V1173H1906 M1910.5 1173H1915V1178 M1901.5 1189V1194H1906 M1910.5 1194H1915V1189" stroke="#4a73d6" stroke-width="1.8" stroke-linecap="butt" stroke-linejoin="miter"/>
 <path d="M1961 1187V1171A2 2 0 0 1 1963 1169H1981A2 2 0 0 1 1983 1171V1187" stroke-width="2"/>
 <path d="M1959 1195.5H1967.5 M1963.5 1191.5L1959 1195.5L1963.5 1199.5 M1976.5 1195.5H1985 M1980.5 1191.5L1985 1195.5L1980.5 1199.5" stroke="#4a73d6" stroke-width="2"/>
 <path d="M2022.5 1184H2048" stroke-width="2" stroke-linecap="butt"/>
 <path d="M2230 1184H2256 M2243 1171V1197" stroke-width="2" stroke-linecap="butt"/>
</svg>
<!-- window corners -->
<svg class="a" style="left:2258px;top:1186px" width="30" height="30" viewBox="0 0 30 30"><path d="M30 5A25 25 0 0 1 5 30H30Z" fill="#252d38"/></svg>
<svg class="a" style="left:0;top:1190px" width="26" height="26" viewBox="0 0 26 26"><path d="M0 18A22 22 0 0 0 22 26H0Z" fill="#c8c8c8"/></svg>

</body></html>
